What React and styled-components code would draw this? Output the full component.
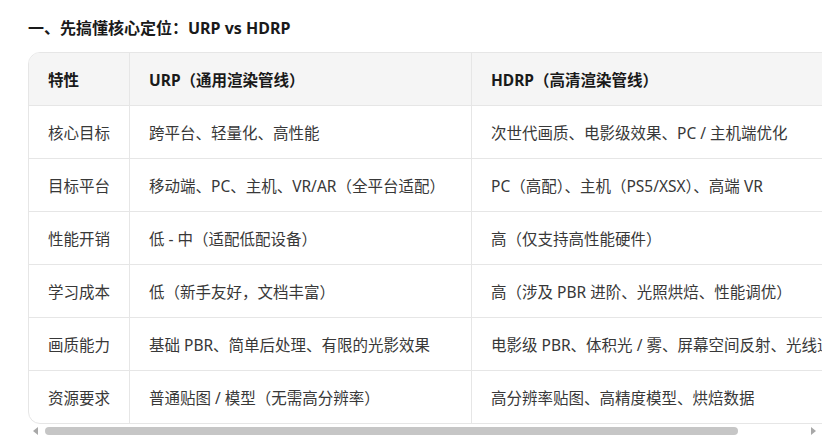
import React from 'react'
import styled, { createGlobalStyle } from 'styled-components'

const GlobalStyle = createGlobalStyle`
    html, body {
        margin: 0;
        padding: 0;
        background: #fff;
        overflow: hidden;
    }
    body {
        font-family: 'Noto Sans', 'Noto Sans CJK SC', sans-serif;
        color: #333;
    }
`;

const Page = styled.div`
    padding: 17px 11px 0 28px;
`;

const Heading = styled.h3`
    margin: 0 0 13px;
    font-size: 16px;
    line-height: 22px;
    font-weight: 700;
    color: #1a1a1a;
`;

const Scroller = styled.div`
    overflow: hidden;
`;

const Table = styled.table`
    width: 870px;
    border-collapse: separate;
    border-spacing: 0;
    border: 1px solid #e6e6e6;
    border-radius: 12px;
    overflow: hidden;
    table-layout: fixed;
    font-size: 15.5px;
`;

const Th = styled.th`
    box-sizing: border-box;
    width: ${({ w }) => w}px;
    height: 52px;
    padding: 0 19px;
    text-align: left;
    font-weight: 700;
    color: #1a1a1a;
    background: #f5f5f5;
    white-space: nowrap;
    border-left: ${({ first }) => (first ? 'none' : '1px solid #e6e6e6')};
`;

const Td = styled.td`
    height: 52px;
    padding: 0 19px;
    color: #383838;
    white-space: nowrap;
    border-top: 1px solid #e6e6e6;
    border-left: ${({ first }) => (first ? 'none' : '1px solid #e6e6e6')};
`;

const ScrollBar = styled.div`
    display: flex;
    align-items: center;
    height: 14px;
    padding: 0 6px 0 5px;
    gap: 7px;
`;

const Arrow = styled.span`
    width: 0;
    height: 0;
    border-top: 4px solid transparent;
    border-bottom: 4px solid transparent;
    ${({ dir }) => (dir === 'left'
        ? 'border-right: 5px solid #a8a8a8;'
        : 'border-left: 5px solid #a8a8a8;')}
`;

const Track = styled.div`
    flex: 1;
    height: 8px;
`;

const Thumb = styled.div`
    height: 8px;
    border-radius: 4px;
    background: #c6c6c6;
`;

const columns = [
    { title: '特性', w: 100 },
    { title: 'URP（通用渲染管线）', w: 342 },
    { title: 'HDRP（高清渲染管线）', w: 426 },
];

const rows = [
    ['核心目标', '跨平台、轻量化、高性能', '次世代画质、电影级效果、PC / 主机端优化'],
    ['目标平台', '移动端、PC、主机、VR/AR（全平台适配）', 'PC（高配）、主机（PS5/XSX）、高端 VR'],
    ['性能开销', '低 - 中（适配低配设备）', '高（仅支持高性能硬件）'],
    ['学习成本', '低（新手友好，文档丰富）', '高（涉及 PBR 进阶、光照烘焙、性能调优）'],
    ['画质能力', '基础 PBR、简单后处理、有限的光影效果', '电影级 PBR、体积光 / 雾、屏幕空间反射、光线追踪'],
    ['资源要求', '普通贴图 / 模型（无需高分辨率）', '高分辨率贴图、高精度模型、烘焙数据'],
];

const visibleWidth = 794
const tableWidth = 870

const App = () => {
    return (
        <>
            <GlobalStyle />
            <Page>
                <Heading>一、先搞懂核心定位：URP vs HDRP</Heading>
                <Scroller>
                    <Table>
                        <thead>
                            <tr>
                                {columns.map((col, i) => (
                                    <Th key={i} w={col.w} first={i === 0}>
                                        {col.title}
                                    </Th>
                                ))}
                            </tr>
                        </thead>
                        <tbody>
                            {rows.map((row, r) => (
                                <tr key={r}>
                                    {row.map((cell, i) => (
                                        <Td key={i} first={i === 0}>{cell}</Td>
                                    ))}
                                </tr>
                            ))}
                        </tbody>
                    </Table>
                </Scroller>
                <ScrollBar>
                    <Arrow dir="left" />
                    <Track>
                        <Thumb style={{ width: `${(visibleWidth / tableWidth) * 100}%` }} />
                    </Track>
                    <Arrow dir="right" />
                </ScrollBar>
            </Page>
        </>
    )
}

export default App
